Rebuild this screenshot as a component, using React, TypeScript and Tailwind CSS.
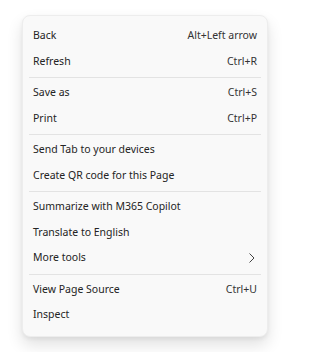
import React from 'react';

type Entry = { label: string; shortcut?: string; submenu?: boolean } | 'sep';

const entries: Entry[] = [
  { label: 'Back', shortcut: 'Alt+Left arrow' },
  { label: 'Refresh', shortcut: 'Ctrl+R' },
  'sep',
  { label: 'Save as', shortcut: 'Ctrl+S' },
  { label: 'Print', shortcut: 'Ctrl+P' },
  'sep',
  { label: 'Send Tab to your devices' },
  { label: 'Create QR code for this Page' },
  'sep',
  { label: 'Summarize with M365 Copilot' },
  { label: 'Translate to English' },
  { label: 'More tools', submenu: true },
  'sep',
  { label: 'View Page Source', shortcut: 'Ctrl+U' },
  { label: 'Inspect' },
];

export default function App() {
  return (
    <div className="w-[293px] h-[352px] bg-white pt-[15px] pl-[22px]" style={{ fontFamily: '"Noto Sans", "Open Sans", sans-serif' }}>
      <div className="w-[246px] rounded-[8px] bg-[#f9f9f9] py-[7.5px] shadow-[0_2px_4px_rgba(0,0,0,0.06),0_8px_16px_rgba(0,0,0,0.12)] border border-[#ededed]">
        {entries.map((e, i) =>
          e === 'sep' ? (
            <div key={i} className="my-[2.5px] mx-[6px] h-px bg-[#e3e3e3]" />
          ) : (
            <div key={i} className="h-[25.5px] flex items-center justify-between pl-[10px] pr-[10px] text-[10.5px] text-[#242424]">
              <span>{e.label}</span>
              {e.shortcut && <span className="text-[#333333]">{e.shortcut}</span>}
              {e.submenu && (
                <svg width="8" height="12" viewBox="0 0 8 12" className="mr-[1px]">
                  <path d="M1.5 1.5 L6 6 L1.5 10.5" fill="none" stroke="#444" strokeWidth="1" />
                </svg>
              )}
            </div>
          )
        )}
      </div>
    </div>
  );
}
